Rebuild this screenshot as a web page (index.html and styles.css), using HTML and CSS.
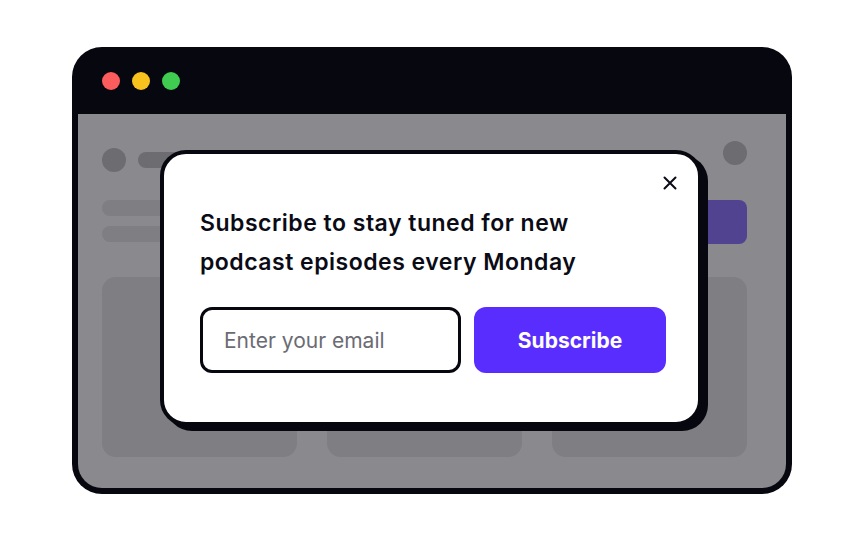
FILE: index.html
```html
<!DOCTYPE html>
<html lang="en">
<head>
<meta charset="utf-8">
<title>Subscribe</title>
<link rel="stylesheet" href="styles.css">
</head>
<body>
<div class="window">
  <div class="titlebar">
    <span class="dot dot-red"></span>
    <span class="dot dot-yellow"></span>
    <span class="dot dot-green"></span>
  </div>
  <div class="page">
    <div class="page-header">
      <div class="brand">
        <span class="sk-circle"></span>
        <span class="sk-pill"></span>
      </div>
      <span class="sk-avatar"></span>
    </div>
    <div class="page-hero">
      <div class="hero-lines">
        <span class="sk-line"></span>
        <span class="sk-line"></span>
      </div>
      <span class="sk-button"></span>
    </div>
    <div class="page-cards">
      <div class="sk-card"></div>
      <div class="sk-card"></div>
      <div class="sk-card"></div>
    </div>
  </div>

  <div class="modal">
    <button class="close" aria-label="Close">
      <svg width="14" height="14" viewBox="0 0 14 14"><path d="M1.5 1.5 L12.5 12.5 M12.5 1.5 L1.5 12.5" stroke="#0b0b16" stroke-width="2" stroke-linecap="round" fill="none"/></svg>
    </button>
    <h2 class="modal-title">Subscribe to stay tuned for new podcast episodes every Monday</h2>
    <form class="form">
      <input class="email" type="email" placeholder="Enter your email">
      <button class="submit" type="button">Subscribe</button>
    </form>
  </div>
</div>
</body>
</html>
```
FILE: styles.css
```css
* { box-sizing: border-box; }

body {
  margin: 0;
  background: #ffffff;
  font-family: Inter, "Noto Sans", sans-serif;
}

.window {
  position: relative;
  width: 720px;
  height: 447px;
  margin: 47px 0 0 72px;
  background: #07070f;
  border-radius: 30px;
  padding: 0 6px 6px 6px;
  display: flex;
  flex-direction: column;
}

.titlebar {
  height: 67px;
  flex: none;
  display: flex;
  align-items: flex-start;
  gap: 12px;
  padding: 25px 0 0 24px;
}

.dot {
  width: 18px;
  height: 18px;
  border-radius: 50%;
}
.dot-red { background: #fd5c5c; }
.dot-yellow { background: #f7c31c; }
.dot-green { background: #40cb51; }

.page {
  flex: 1;
  background: #8a8a8e;
  border-radius: 0 0 24px 24px;
  padding: 27px 39px 0 24px;
  display: flex;
  flex-direction: column;
}

.page-header {
  display: flex;
  justify-content: space-between;
  align-items: flex-start;
}

.brand {
  display: flex;
  align-items: center;
  gap: 12px;
  margin-top: 7px;
}

.sk-circle {
  width: 24px;
  height: 24px;
  border-radius: 50%;
  background: #6c6c71;
}

.sk-pill {
  width: 110px;
  height: 16px;
  border-radius: 8px;
  background: #6c6c71;
}

.sk-avatar {
  width: 24px;
  height: 24px;
  border-radius: 50%;
  background: #6c6c71;
}

.page-hero {
  margin-top: 28px;
  display: flex;
  justify-content: space-between;
  align-items: flex-start;
}

.hero-lines {
  display: flex;
  flex-direction: column;
  gap: 10px;
}

.sk-line {
  width: 220px;
  height: 16px;
  border-radius: 8px;
  background: #7f7f83;
}

.sk-button {
  width: 130px;
  height: 44px;
  border-radius: 8px;
  background: #524391;
}

.page-cards {
  margin-top: 33px;
  display: grid;
  grid-template-columns: repeat(3, 1fr);
  gap: 30px;
}

.sk-card {
  height: 180px;
  border-radius: 14px;
  background: #7e7e83;
}

.modal {
  position: absolute;
  left: 88px;
  top: 103px;
  width: 542px;
  height: 276px;
  background: #ffffff;
  border: 4px solid #07070f;
  border-radius: 26px;
  box-shadow: 6px 5px 0 #07070f;
  padding: 50px 32px 0 36px;
}

.close {
  position: absolute;
  top: 22px;
  right: 21px;
  width: 14px;
  height: 14px;
  padding: 0;
  border: 0;
  background: none;
  display: flex;
}

.modal-title {
  margin: 0;
  max-width: 420px;
  font-size: 23px;
  line-height: 39px;
  font-weight: 600;
  color: #0b0b16;
  letter-spacing: 0.5px;
}

.form {
  margin: 25px 0 0 0;
  display: flex;
  gap: 13px;
}

.email {
  width: 261px;
  height: 66px;
  border: 3px solid #07070f;
  border-radius: 12px;
  padding: 0 0 0 21px;
  font-family: inherit;
  font-size: 21px;
  color: #0b0b16;
  background: #ffffff;
  outline: none;
}
.email::placeholder { color: #6b6b73; }

.submit {
  width: 192px;
  height: 66px;
  border: 0;
  border-radius: 12px;
  background: #5a2dff;
  color: #ffffff;
  font-family: inherit;
  font-size: 21px;
  font-weight: 700;
}
```
